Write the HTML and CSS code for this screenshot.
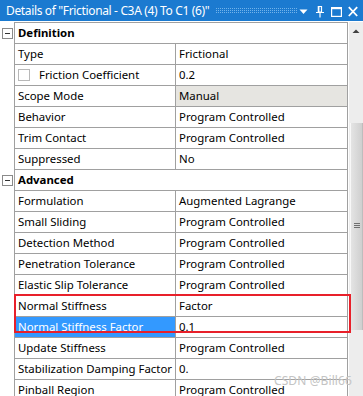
FILE: index.html
```html
<!DOCTYPE html>
<html lang="en">
<head>
  <meta charset="UTF-8" />
  <title>Details</title>
  <link rel="stylesheet" href="styles.css">
</head>
<body>
  <div class="panel">
    <!-- Title bar -->
    <div class="titlebar">
      <span class="title-text">Details of "Frictional - C3A (4) To C1 (6)"</span>
      <span class="dots"></span>
      <svg class="tb-icon tri" width="9" height="21" viewBox="0 0 9 21"><polygon points="0.5,9.5 8.5,9.5 4.5,14" fill="#fff"/></svg>
      <svg class="tb-icon pin" width="8" height="21" viewBox="0 0 8 21"><path d="M2.5 6.5h3v5.5h-3z M0 12.5h8 M4 12.5v5" stroke="#fff" stroke-width="1.2" fill="none"/><rect x="1.8" y="6" width="1.6" height="6.5" fill="#fff"/></svg>
      <svg class="tb-icon max" width="11" height="21" viewBox="0 0 11 21"><rect x="0.6" y="7.6" width="9.8" height="8.8" stroke="#fff" stroke-width="1.2" fill="none"/><rect x="0" y="7" width="11" height="2.2" fill="#fff"/></svg>
      <svg class="tb-icon close" width="10" height="21" viewBox="0 0 10 21"><path d="M0.8 7.2l8.4 8.8M9.2 7.2l-8.4 8.8" stroke="#fff" stroke-width="1.8"/></svg>
    </div>

    <div class="content">
      <div class="sheet">
        <div class="topline"></div>

        <!-- Definition -->
        <div class="row head">
          <div class="gutter"><span class="toggle"></span></div>
          <div class="cap">Definition</div>
        </div>
        <div class="row"><div class="gutter"></div><div class="lbl">Type</div><div class="val">Frictional</div></div>
        <div class="row"><div class="gutter"></div><div class="lbl"><span class="check"></span>Friction Coefficient</div><div class="val">0.2</div></div>
        <div class="row"><div class="gutter"></div><div class="lbl">Scope Mode</div><div class="val readonly">Manual</div></div>
        <div class="row"><div class="gutter"></div><div class="lbl">Behavior</div><div class="val">Program Controlled</div></div>
        <div class="row"><div class="gutter"></div><div class="lbl">Trim Contact</div><div class="val">Program Controlled</div></div>
        <div class="row"><div class="gutter"></div><div class="lbl">Suppressed</div><div class="val">No</div></div>

        <!-- Advanced -->
        <div class="row head">
          <div class="gutter"><span class="toggle"></span></div>
          <div class="cap">Advanced</div>
        </div>
        <div class="row"><div class="gutter"></div><div class="lbl">Formulation</div><div class="val">Augmented Lagrange</div></div>
        <div class="row"><div class="gutter"></div><div class="lbl">Small Sliding</div><div class="val">Program Controlled</div></div>
        <div class="row"><div class="gutter"></div><div class="lbl">Detection Method</div><div class="val">Program Controlled</div></div>
        <div class="row"><div class="gutter"></div><div class="lbl">Penetration Tolerance</div><div class="val">Program Controlled</div></div>
        <div class="row"><div class="gutter"></div><div class="lbl">Elastic Slip Tolerance</div><div class="val">Program Controlled</div></div>
        <div class="row"><div class="gutter"></div><div class="lbl">Normal Stiffness</div><div class="val">Factor</div></div>
        <div class="row"><div class="gutter"></div><div class="lbl selected">Normal Stiffness Factor</div><div class="val">0.1</div></div>
        <div class="row"><div class="gutter"></div><div class="lbl">Update Stiffness</div><div class="val">Program Controlled</div></div>
        <div class="row"><div class="gutter"></div><div class="lbl">Stabilization Damping Factor</div><div class="val">0.</div></div>
        <div class="row"><div class="gutter"></div><div class="lbl">Pinball Region</div><div class="val">Program Controlled</div></div>
      </div>

      <!-- Scrollbar -->
      <div class="scrollbar">
        <svg class="arrow-up" width="14" height="8" viewBox="0 0 14 8"><polygon points="3.5,6 10.5,6 7,2.5" fill="#404040"/></svg>
        <div class="thumb"><span class="grip"></span></div>
      </div>

      <!-- overlays -->
      <div class="highlight"></div>
      <div class="watermark">CSDN @Bill66</div>
    </div>
  </div>
</body>
</html>
```

FILE: styles.css
```css
body {
  margin: 0;
  background-color: #fff;
  font-family: "Noto Sans", "Open Sans", sans-serif;
  color: #000;
}

.panel {
  width: 363px;
  height: 396px;
  overflow: hidden;
}

/* Title bar */
.titlebar {
  height: 21px;
  background-color: #1b7ad0;
  color: #fff;
  display: flex;
  align-items: center;
  padding: 0 5px 0 6px;
  font-size: 12px;
  letter-spacing: -0.35px;
  white-space: nowrap;
}

.title-text {
  line-height: 21px;
}

.dots {
  flex: 1;
  height: 5px;
  margin: 0 2px 0 6px;
  background-image: conic-gradient(#72b3ea 25%, transparent 0);
  background-size: 2px 2px;
}

.tb-icon {
  display: block;
  flex-shrink: 0;
}

.tri {
  margin-right: 8px;
}

.pin {
  margin-right: 7px;
}

.max {
  margin-right: 6px;
}

/* Content */
.content {
  position: relative;
  display: flex;
  padding-top: 1px;
}

.sheet {
  width: 348px;
  margin-right: 1px;
}

.topline {
  margin-left: 14px;
  border-top: 1px solid #a0a0a0;
}

.row {
  display: grid;
  grid-template-columns: 14px 162px 172px;
  height: 21px;
  font-size: 11.4px;
  line-height: 19px;
}

.lbl,
.val,
.cap {
  border-bottom: 1px solid #a0a0a0;
  border-right: 1px solid #a0a0a0;
  box-sizing: border-box;
  padding-left: 3px;
  white-space: nowrap;
  overflow: hidden;
}

.lbl,
.cap {
  border-left: 1px solid #a0a0a0;
}

.cap {
  grid-column: 2 / 4;
  font-weight: bold;
}

.val.readonly {
  background-color: #e6e5e1;
}

.lbl.selected {
  background-color: #3399ff;
  color: #fff;
}

.check {
  display: inline-block;
  width: 10px;
  height: 10px;
  border: 1px solid #b8b8b8;
  vertical-align: -2px;
  margin-right: 9px;
}

/* Group toggle box */
.toggle {
  display: block;
  width: 9px;
  height: 9px;
  margin: 5px 0 0 2px;
  border: 1px solid #8a8a8a;
  background: linear-gradient(#333, #333) center / 5px 1px no-repeat;
}

/* Scrollbar */
.scrollbar {
  width: 14px;
  height: 375px;
  background-color: #ededed;
  display: flex;
  flex-direction: column;
  align-items: flex-end;
}

.arrow-up {
  display: block;
  margin-top: 5px;
}

.thumb {
  width: 13px;
  height: 207px;
  margin-top: 88px;
  box-sizing: border-box;
  border-left: 1px solid #f8f8f8;
  border-right: 1px solid #bdbdbd;
  background: linear-gradient(90deg, #e4e4e4, #cfcfcf);
  display: flex;
  justify-content: center;
}

.grip {
  width: 6px;
  height: 5px;
  margin-top: 100px;
  background: repeating-linear-gradient(#707070 0 1px, transparent 1px 2px);
}

/* Overlays */
.highlight {
  position: absolute;
  left: 14px;
  top: 273px;
  width: 337px;
  height: 39px;
  box-sizing: border-box;
  border: 2px solid #e8202a;
}

.watermark {
  position: absolute;
  left: 274px;
  top: 351px;
  font-size: 12px;
  color: #c4c4c4;
  letter-spacing: 0.1px;
}
```
